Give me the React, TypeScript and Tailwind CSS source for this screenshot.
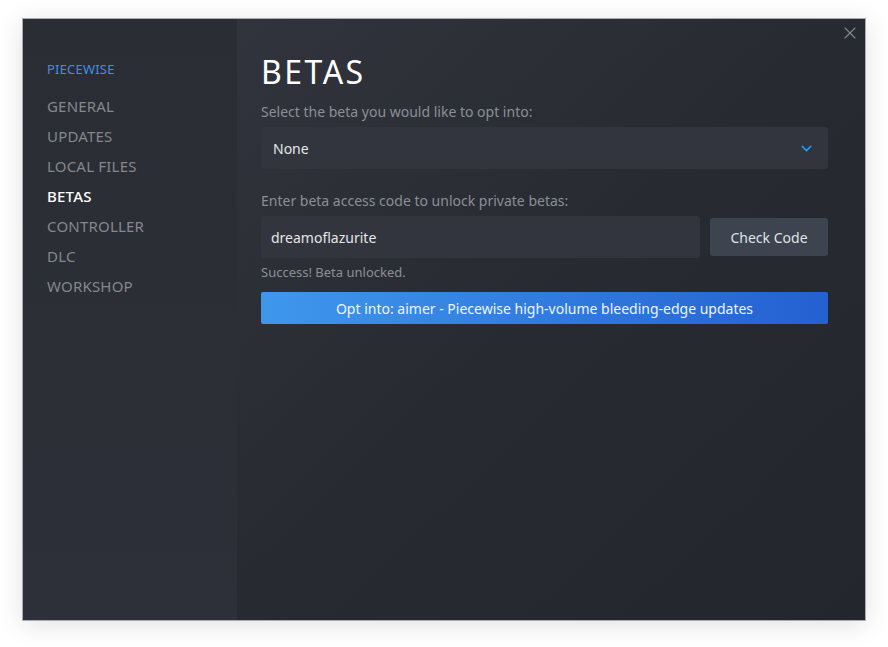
import { X, ChevronDown } from "lucide-react";

const navItems = ["GENERAL", "UPDATES", "LOCAL FILES", "BETAS", "CONTROLLER", "DLC", "WORKSHOP"];

export default function App() {
  return (
    <div
      className="min-h-screen w-[888px] h-[647px] bg-white pt-[18px] pl-[22px]"
      style={{ fontFamily: "'Noto Sans', 'Open Sans', sans-serif" }}
    >
      <div className="relative flex w-[844px] h-[603px] border border-[#a9abae] shadow-[0_4px_24px_rgba(0,0,0,0.12)]">
        {/* sidebar */}
        <div className="w-[214px] h-full bg-gradient-to-b from-[#2a2d34] to-[#2d3038] pl-6 pt-[40px]">
          <div className="text-[13px] leading-5 text-[#3d8fe8] tracking-[0.2px]">PIECEWISE</div>
          <div className="mt-[12px] flex flex-col">
            {navItems.map((item) => (
              <div
                key={item}
                className={
                  item === "BETAS"
                    ? "h-[30px] leading-[30px] text-[15px] font-medium text-white tracking-[0.2px]"
                    : "h-[30px] leading-[30px] text-[15px] text-[#84878c] tracking-[0.2px]"
                }
              >
                {item}
              </div>
            ))}
          </div>
        </div>

        {/* content */}
        <div className="flex-1 h-full bg-gradient-to-br from-[#31343c] via-[#272a31] to-[#23262c] pl-6 pr-[37px] pt-[34px]">
          <h1 className="text-[32px] leading-[38px] text-white tracking-[2.5px]">BETAS</h1>
          <div className="mt-[11px] text-[14px] leading-5 text-[#8b8f95]">
            Select the beta you would like to opt into:
          </div>
          <div className="mt-[5px] h-[42px] rounded-[3px] bg-[#32353e] flex items-center justify-between pl-3 pr-[13px]">
            <span className="text-[14px] text-[#e4e6e8]">None</span>
            <ChevronDown size={17} strokeWidth={2} className="text-[#1a9fff]" />
          </div>

          <div className="mt-[22px] text-[14px] leading-5 text-[#8b8f95]">
            Enter beta access code to unlock private betas:
          </div>
          <div className="mt-[5px] flex items-center gap-[10px]">
            <div className="flex-1 h-[42px] rounded-[3px] bg-[#32353e] flex items-center pl-[10px]">
              <span className="text-[14px] text-[#e4e6e8]">dreamoflazurite</span>
            </div>
            <button className="w-[118px] h-[38px] rounded-[3px] bg-[#3d4450] text-[14px] text-[#dfe3e6]">
              Check Code
            </button>
          </div>
          <div className="mt-[4px] text-[13px] leading-5 text-[#8b8f95]">Success! Beta unlocked.</div>
          <button className="mt-[10px] w-full h-[32px] rounded-[2px] bg-gradient-to-r from-[#3f97ec] to-[#2560d1] text-[14px] text-[#eef4fc]">
            Opt into: aimer - Piecewise high-volume bleeding-edge updates
          </button>
        </div>

        <X size={20} strokeWidth={1.3} className="absolute top-[4px] right-[5px] text-[#7e8a94]" />
      </div>
    </div>
  );
}
